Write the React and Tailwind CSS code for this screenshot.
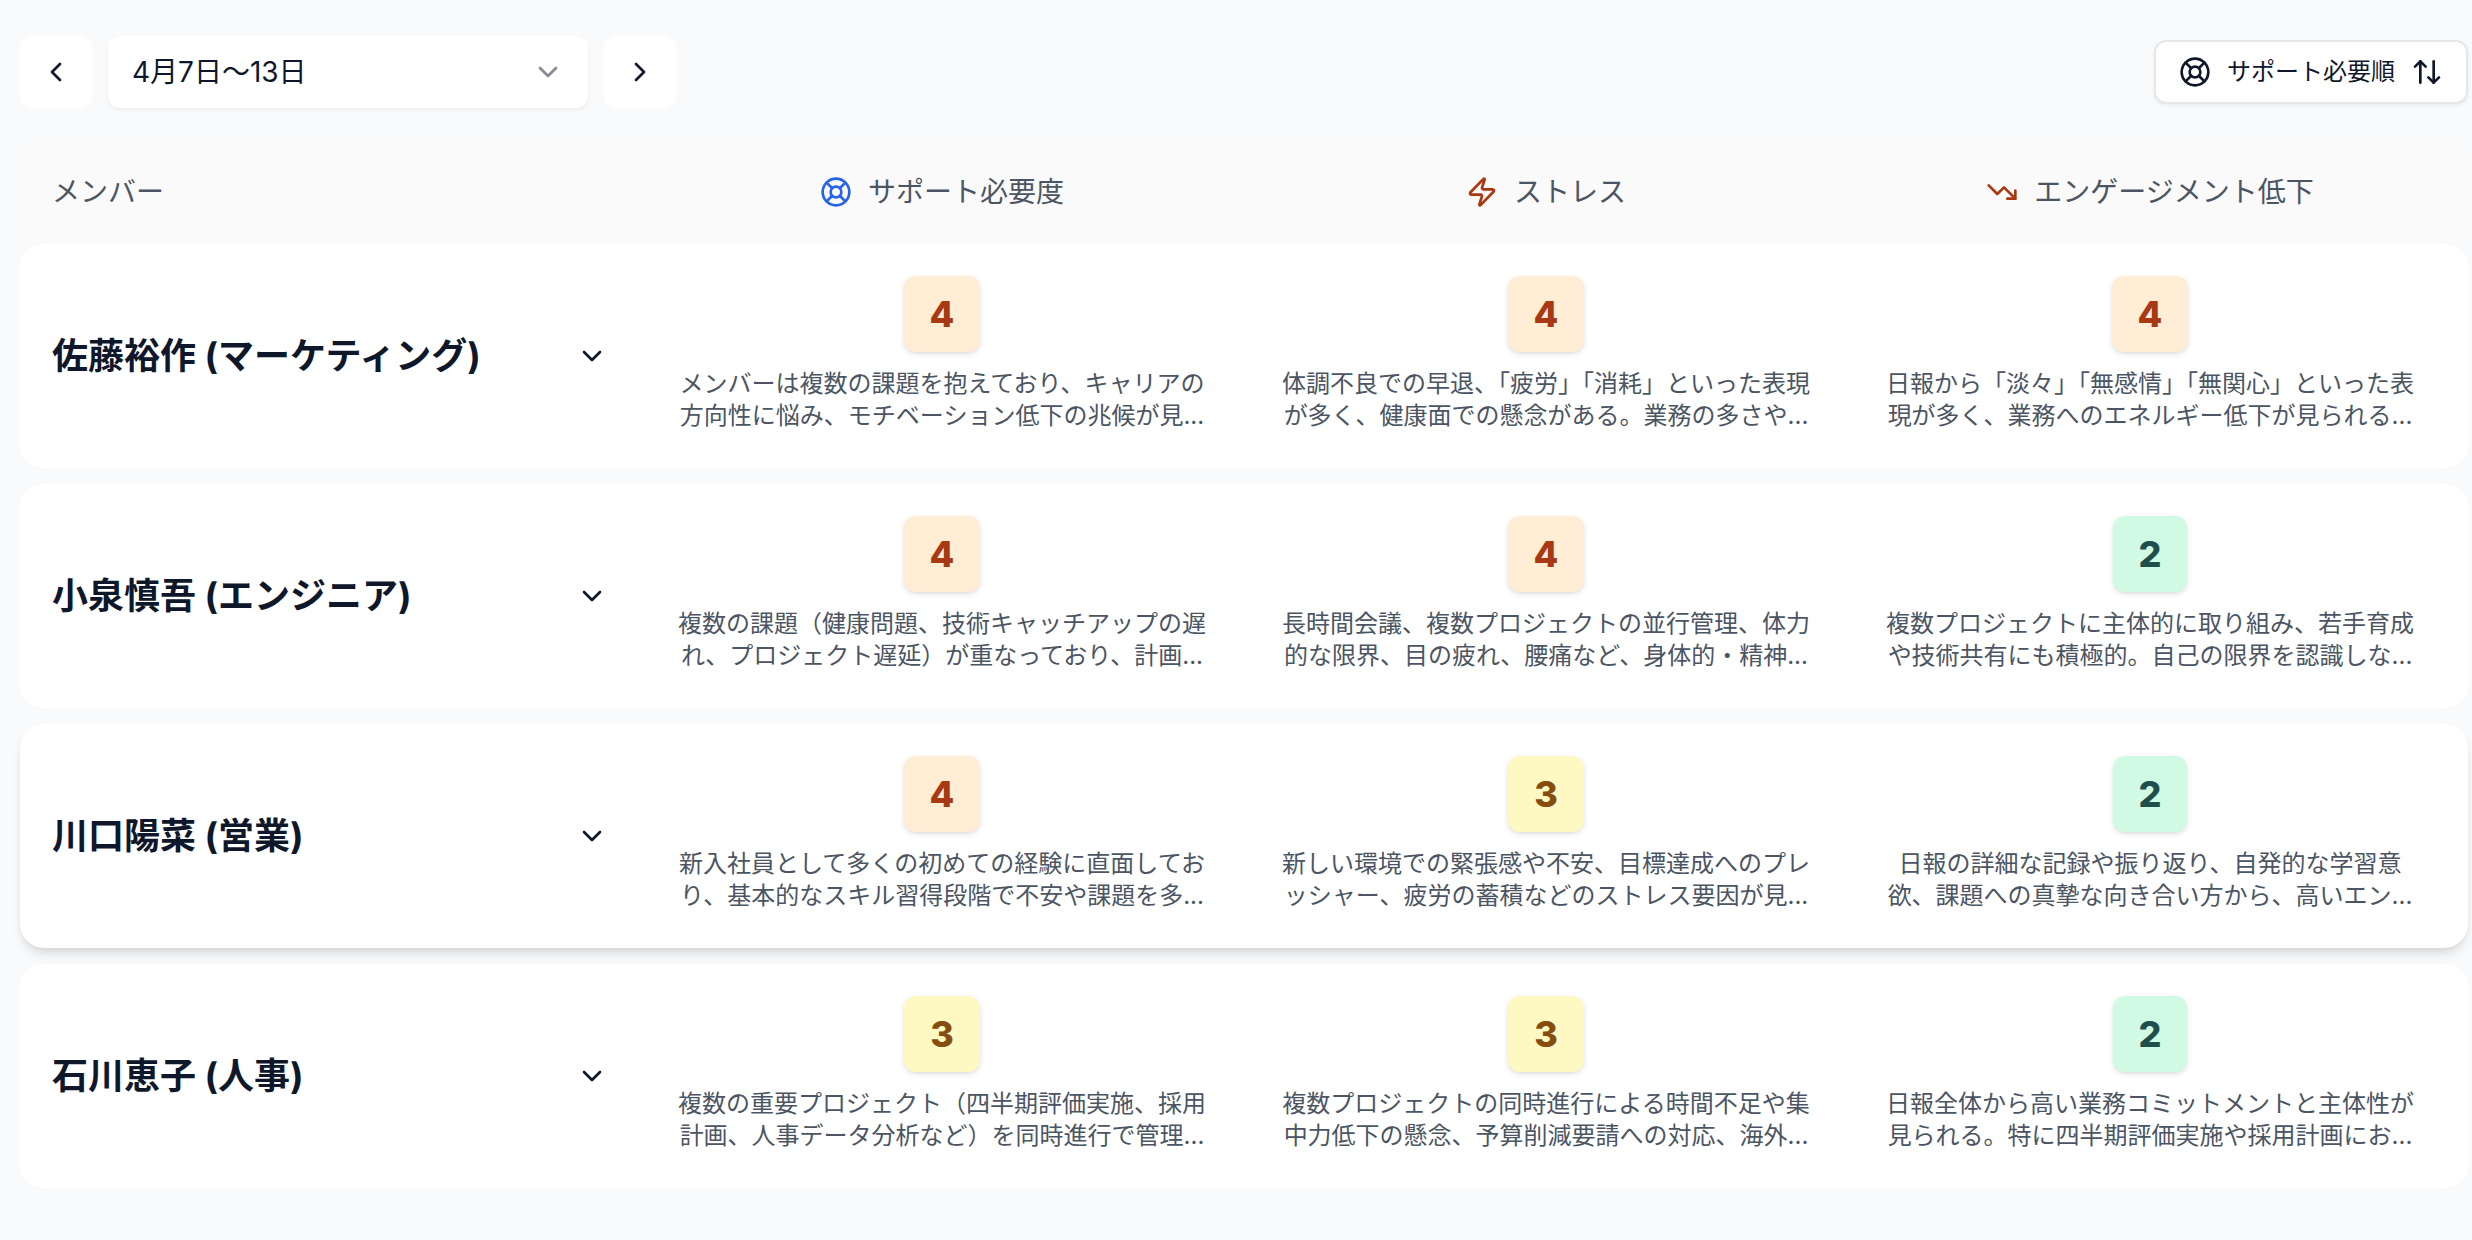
import {
  ArrowUpDown,
  ChevronDown,
  ChevronLeft,
  ChevronRight,
  LifeBuoy,
  TrendingDown,
  Zap,
} from 'lucide-react'

// Badge colors per score
const SCORE_STYLES = {
  2: 'bg-[#d1fae5] text-[#1f4f4a]',
  3: 'bg-[#fef9c3] text-[#854d0e]',
  4: 'bg-[#ffedd5] text-[#a73a15]',
}

const METRICS = [
  { key: 'support', label: 'サポート必要度', Icon: LifeBuoy, color: 'text-[#2563eb]' },
  { key: 'stress', label: 'ストレス', Icon: Zap, color: 'text-[#ab3710]' },
  { key: 'engagement', label: 'エンゲージメント低下', Icon: TrendingDown, color: 'text-[#ab3710]' },
]

const MEMBERS = [
  {
    name: '佐藤裕作 (マーケティング)',
    support: { score: 4, text: 'メンバーは複数の課題を抱えており、キャリアの方向性に悩み、モチベーション低下の兆候が見...' },
    stress: { score: 4, text: '体調不良での早退、「疲労」「消耗」といった表現が多く、健康面での懸念がある。業務の多さや...' },
    engagement: { score: 4, text: '日報から「淡々」「無感情」「無関心」といった表現が多く、業務へのエネルギー低下が見られる...' },
  },
  {
    name: '小泉慎吾 (エンジニア)',
    support: { score: 4, text: '複数の課題（健康問題、技術キャッチアップの遅れ、プロジェクト遅延）が重なっており、計画...' },
    stress: { score: 4, text: '長時間会議、複数プロジェクトの並行管理、体力的な限界、目の疲れ、腰痛など、身体的・精神...' },
    engagement: { score: 2, text: '複数プロジェクトに主体的に取り組み、若手育成や技術共有にも積極的。自己の限界を認識しな...' },
  },
  {
    name: '川口陽菜 (営業)',
    active: true,
    support: { score: 4, text: '新入社員として多くの初めての経験に直面しており、基本的なスキル習得段階で不安や課題を多...' },
    stress: { score: 3, text: '新しい環境での緊張感や不安、目標達成へのプレッシャー、疲労の蓄積などのストレス要因が見...' },
    engagement: { score: 2, text: '日報の詳細な記録や振り返り、自発的な学習意欲、課題への真摯な向き合い方から、高いエン...' },
  },
  {
    name: '石川恵子 (人事)',
    support: { score: 3, text: '複数の重要プロジェクト（四半期評価実施、採用計画、人事データ分析など）を同時進行で管理...' },
    stress: { score: 3, text: '複数プロジェクトの同時進行による時間不足や集中力低下の懸念、予算削減要請への対応、海外...' },
    engagement: { score: 2, text: '日報全体から高い業務コミットメントと主体性が見られる。特に四半期評価実施や採用計画にお...' },
  },
]

function WeekPicker() {
  return (
    <div className="flex items-center gap-4">
      <button type="button" aria-label="前の週" className="flex size-18 items-center justify-center rounded-xl bg-white">
        <ChevronLeft size={32} />
      </button>
      <div className="grid w-120 items-center rounded-xl bg-white shadow-[0_2px_4px_rgba(0,0,0,0.05)]">
        <select
          aria-label="期間"
          className="col-start-1 row-start-1 h-18 w-full appearance-none rounded-xl px-6 text-[28px]"
        >
          <option>4月7日〜13日</option>
        </select>
        <ChevronDown
          size={32}
          className="pointer-events-none col-start-1 row-start-1 mr-6 justify-self-end opacity-50"
        />
      </div>
      <button type="button" aria-label="次の週" className="flex size-18 items-center justify-center rounded-xl bg-white">
        <ChevronRight size={32} />
      </button>
    </div>
  )
}

function MetricCell({ score, text }) {
  return (
    <div className="flex flex-col items-center gap-4 px-4 pb-1">
      <span
        className={`rounded-xl px-[26px] py-[18px] text-4xl font-extrabold shadow-[0_2px_6px_rgba(0,0,0,0.1),0_2px_4px_-2px_rgba(0,0,0,0.1)] ${SCORE_STYLES[score]}`}
      >
        {score}
      </span>
      <p className="line-clamp-2 text-center text-2xl text-[#4b5563]">{text}</p>
    </div>
  )
}

function MemberRow({ member }) {
  return (
    <section
      className={`grid grid-cols-4 gap-8 rounded-3xl bg-white p-8 ${
        member.active ? 'shadow-[0_8px_12px_-2px_rgba(0,0,0,0.1),0_4px_8px_-4px_rgba(0,0,0,0.1)]' : ''
      }`}
    >
      <div className="flex items-center justify-between">
        <h2 className="text-4xl font-bold">{member.name}</h2>
        <button type="button" aria-label="詳細を開く" className="p-4">
          <ChevronDown size={32} />
        </button>
      </div>
      {METRICS.map(({ key }) => (
        <MetricCell key={key} {...member[key]} />
      ))}
    </section>
  )
}

export default function App() {
  return (
    <main
      lang="ja"
      className="min-h-screen bg-[#f8fafc] pt-9 pr-1 pb-13 pl-5 font-[Inter,'Noto_Sans_CJK_JP',sans-serif] text-[#0f172a]"
    >
      <div className="flex items-center justify-between">
        <WeekPicker />
        <button
          type="button"
          className="flex h-16 items-center gap-4 rounded-xl border-2 border-[#e5e7eb] bg-white px-[23px] text-2xl shadow-[0_2px_4px_rgba(0,0,0,0.05)]"
        >
          <LifeBuoy size={32} />
          サポート必要順
          <ArrowUpDown size={32} />
        </button>
      </div>

      {/* Column headings */}
      <div className="mt-8 grid h-26 grid-cols-4 items-center gap-8 rounded-t-3xl bg-[#fafafa] px-8 text-[28px] text-[#4b5563]">
        <div>メンバー</div>
        {METRICS.map(({ key, label, Icon, color }) => (
          <div key={key} className="flex items-center justify-center gap-4">
            <Icon size={32} className={color} />
            {label}
          </div>
        ))}
      </div>

      <div className="flex flex-col gap-4">
        {MEMBERS.map((member) => (
          <MemberRow key={member.name} member={member} />
        ))}
      </div>
    </main>
  )
}
